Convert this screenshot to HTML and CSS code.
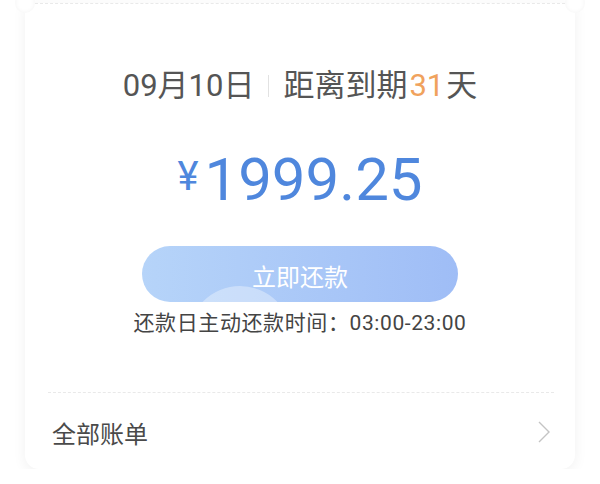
FILE: index.html
```html
<!DOCTYPE html>
<html lang="zh-CN">
<head>
    <meta charset="UTF-8">
    <meta name="viewport" content="width=device-width, initial-scale=1.0">
    <title>账单</title>
    <link rel="stylesheet" href="styles.css">
</head>
<body>
<div class="card">
    <div class="tear"></div>

    <div class="summary">
        <h1 class="due">
            <span>09月10日</span>
            <span class="sep"></span>
            <span>距离到期<em class="days">31</em>天</span>
        </h1>
        <div class="amount"><span class="currency">¥</span>1999.25</div>
        <button class="pay-btn" type="button">立即还款</button>
        <p class="hint">还款日主动还款时间：03:00-23:00</p>
    </div>

    <div class="divider"></div>

    <a class="row" href="#">
        <span>全部账单</span>
        <svg class="chevron" width="14" height="22" viewBox="0 0 14 22" fill="none" stroke="currentColor" stroke-width="1.4">
            <path d="M2 1l10 10L2 21"/>
        </svg>
    </a>
</div>
</body>
</html>
```

FILE: styles.css
```css
:root {
    --text-color: #555;
    --blue: #4f87dd;
    --orange: #f0a25d;
    --line: #e9e9e9;
}

* {
    margin: 0;
    padding: 0;
    box-sizing: border-box;
}

body {
    font-family: Roboto, "Noto Sans CJK SC", sans-serif;
    background: #fff;
    color: var(--text-color);
    overflow: hidden;
}

.card {
    margin: -10px 25px 0;
    background: #fff;
    border-radius: 0 0 14px 14px;
    box-shadow: 0 3px 14px rgba(0, 0, 0, 0.06);
}

/* ticket tear line with notches */
.tear {
    position: relative;
    margin: 13px 10px 0;
    border-top: 1px dashed var(--line);
}

.tear::before,
.tear::after {
    content: '';
    position: absolute;
    top: -11px;
    width: 20px;
    height: 20px;
    border-radius: 50%;
    background: #fff;
    box-shadow: inset 0 0 4px rgba(0, 0, 0, 0.05);
}

.tear::before { left: -20px; }
.tear::after { right: -20px; }

.summary {
    display: flex;
    flex-direction: column;
    align-items: center;
    padding-top: 62px;
}

.due {
    display: flex;
    align-items: center;
    font-size: 31px;
    font-weight: 400;
    line-height: 40px;
    color: #555;
}

.sep {
    width: 1px;
    height: 22px;
    margin: 0 14px;
    background: #e2e2e2;
}

.days {
    font-style: normal;
    color: var(--orange);
    margin: 0 2px;
}

.amount {
    display: flex;
    align-items: flex-start;
    margin-top: 38px;
    font-size: 60px;
    line-height: 72px;
    color: var(--blue);
}

.currency {
    font-size: 40px;
    line-height: 40px;
    margin: 13px 6px 0 0;
}

.pay-btn {
    position: relative;
    overflow: hidden;
    width: 316px;
    height: 56px;
    margin-top: 30px;
    border: none;
    border-radius: 28px;
    background: linear-gradient(90deg, #b6d4f9, #9fbdf6);
    color: #fff;
    font-family: "Noto Sans CJK SC", sans-serif;
    font-size: 24px;
    padding-top: 2px;
}

.pay-btn::after {
    content: '';
    position: absolute;
    left: 46px;
    top: 40px;
    width: 104px;
    height: 104px;
    border-radius: 50%;
    background: rgba(255, 255, 255, 0.35);
}

.hint {
    margin-top: 8px;
    font-size: 21px;
    line-height: 26px;
    letter-spacing: 0.6px;
    color: #444;
}

.divider {
    margin: 56px 21px 0 23px;
    border-top: 1px dashed var(--line);
}

.row {
    display: flex;
    align-items: center;
    justify-content: space-between;
    height: 76px;
    padding: 2px 24px 0 27px;
    color: #4a4a4a;
    text-decoration: none;
    font-family: "Noto Sans CJK SC", sans-serif;
    font-size: 24px;
}

.chevron {
    color: #c4c4c4;
}
```
